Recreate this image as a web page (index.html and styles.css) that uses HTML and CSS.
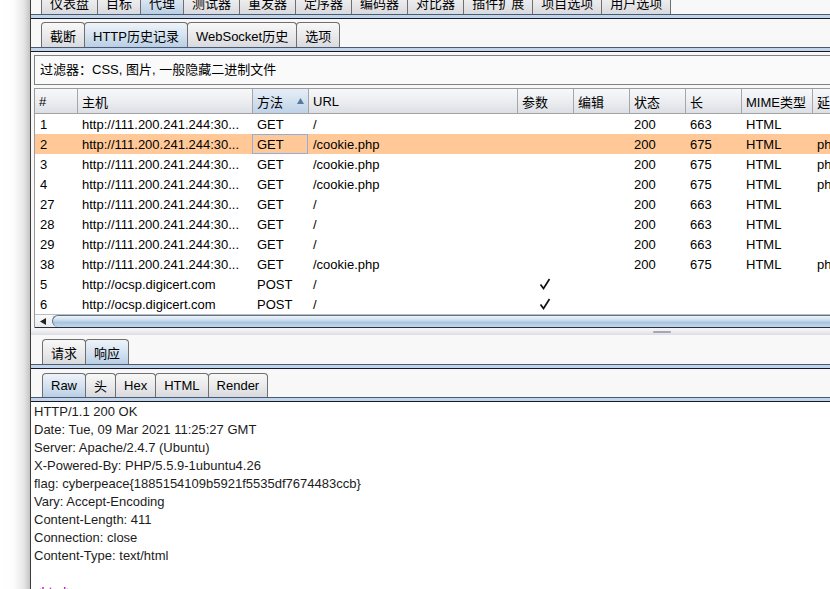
FILE: index.html
```html
<!DOCTYPE html>
<html lang="zh-CN">
<head>
<meta charset="utf-8">
<title>HTTP历史记录</title>
<link rel="stylesheet" href="styles.css">
</head>
<body>
<div class="gutter"></div>
<div class="app">
  <div class="tabs tabs-main">
    <div class="tab">仪表盘</div>
    <div class="tab">目标</div>
    <div class="tab sel">代理</div>
    <div class="tab">测试器</div>
    <div class="tab">重发器</div>
    <div class="tab">定序器</div>
    <div class="tab">编码器</div>
    <div class="tab">对比器</div>
    <div class="tab">插件扩展</div>
    <div class="tab">项目选项</div>
    <div class="tab">用户选项</div>
  </div>
  <div class="band"></div>
  <div class="tabs tabs-sub">
    <div class="tab">截断</div>
    <div class="tab sel">HTTP历史记录</div>
    <div class="tab">WebSocket历史</div>
    <div class="tab">选项</div>
  </div>
  <div class="band"></div>
  <div class="history">
    <div class="filter">过滤器：CSS, 图片, 一般隐藏二进制文件</div>
    <div class="table">
      <div class="row thead">
        <div class="th">#</div>
        <div class="th">主机</div>
        <div class="th sorted"><span>方法</span><svg class="sort" width="7" height="6" viewBox="0 0 7 6"><path d="M3.5 0 L7 6 L0 6 Z" fill="#5878a0"/></svg></div>
        <div class="th">URL</div>
        <div class="th">参数</div>
        <div class="th">编辑</div>
        <div class="th">状态</div>
        <div class="th">长</div>
        <div class="th">MIME类型</div>
        <div class="th">延</div>
      </div>
      <div class="tbody">
        <div class="row"><div class="td">1</div><div class="td">http://111.200.241.244:30...</div><div class="td">GET</div><div class="td">/</div><div class="td"></div><div class="td"></div><div class="td">200</div><div class="td">663</div><div class="td">HTML</div><div class="td"></div></div>
        <div class="row hl"><div class="td">2</div><div class="td">http://111.200.241.244:30...</div><div class="td focus">GET</div><div class="td">/cookie.php</div><div class="td"></div><div class="td"></div><div class="td">200</div><div class="td">675</div><div class="td">HTML</div><div class="td">php</div></div>
        <div class="row"><div class="td">3</div><div class="td">http://111.200.241.244:30...</div><div class="td">GET</div><div class="td">/cookie.php</div><div class="td"></div><div class="td"></div><div class="td">200</div><div class="td">675</div><div class="td">HTML</div><div class="td">php</div></div>
        <div class="row"><div class="td">4</div><div class="td">http://111.200.241.244:30...</div><div class="td">GET</div><div class="td">/cookie.php</div><div class="td"></div><div class="td"></div><div class="td">200</div><div class="td">675</div><div class="td">HTML</div><div class="td">php</div></div>
        <div class="row"><div class="td">27</div><div class="td">http://111.200.241.244:30...</div><div class="td">GET</div><div class="td">/</div><div class="td"></div><div class="td"></div><div class="td">200</div><div class="td">663</div><div class="td">HTML</div><div class="td"></div></div>
        <div class="row"><div class="td">28</div><div class="td">http://111.200.241.244:30...</div><div class="td">GET</div><div class="td">/</div><div class="td"></div><div class="td"></div><div class="td">200</div><div class="td">663</div><div class="td">HTML</div><div class="td"></div></div>
        <div class="row"><div class="td">29</div><div class="td">http://111.200.241.244:30...</div><div class="td">GET</div><div class="td">/</div><div class="td"></div><div class="td"></div><div class="td">200</div><div class="td">663</div><div class="td">HTML</div><div class="td"></div></div>
        <div class="row"><div class="td">38</div><div class="td">http://111.200.241.244:30...</div><div class="td">GET</div><div class="td">/cookie.php</div><div class="td"></div><div class="td"></div><div class="td">200</div><div class="td">675</div><div class="td">HTML</div><div class="td">php</div></div>
        <div class="row"><div class="td">5</div><div class="td">http://ocsp.digicert.com</div><div class="td">POST</div><div class="td">/</div><div class="td check"><svg width="12" height="12" viewBox="0 0 12 12"><path d="M1.5 6.5 L4.5 10.5 L10.5 1" fill="none" stroke="#111" stroke-width="1.7"/></svg></div><div class="td"></div><div class="td"></div><div class="td"></div><div class="td"></div><div class="td"></div></div>
        <div class="row"><div class="td">6</div><div class="td">http://ocsp.digicert.com</div><div class="td">POST</div><div class="td">/</div><div class="td check"><svg width="12" height="12" viewBox="0 0 12 12"><path d="M1.5 6.5 L4.5 10.5 L10.5 1" fill="none" stroke="#111" stroke-width="1.7"/></svg></div><div class="td"></div><div class="td"></div><div class="td"></div><div class="td"></div><div class="td"></div></div>
      </div>
      <div class="hscroll">
        <div class="arrow"><svg width="6" height="7" viewBox="0 0 6 7"><path d="M0 3.5 L6 0 L6 7 Z" fill="#222"/></svg></div>
        <div class="thumb"></div>
      </div>
    </div>
  </div>
  <div class="splitter"><div class="grip"></div></div>
  <div class="tabs tabs-bottom">
    <div class="tab">请求</div>
    <div class="tab sel">响应</div>
  </div>
  <div class="band"></div>
  <div class="tabs tabs-bottom tabs-view">
    <div class="tab sel">Raw</div>
    <div class="tab">头</div>
    <div class="tab">Hex</div>
    <div class="tab">HTML</div>
    <div class="tab">Render</div>
  </div>
  <div class="band"></div>
  <div class="response"><div>HTTP/1.1 200 OK</div><div>Date: Tue, 09 Mar 2021 11:25:27 GMT</div><div>Server: Apache/2.4.7 (Ubuntu)</div><div>X-Powered-By: PHP/5.5.9-1ubuntu4.26</div><div>flag: cyberpeace{1885154109b5921f5535df7674483ccb}</div><div>Vary: Accept-Encoding</div><div>Content-Length: 411</div><div>Connection: close</div><div>Content-Type: text/html</div><div>&nbsp;</div><div class="tag">&lt;html&gt;</div></div>
</div>
</body>
</html>
```

FILE: styles.css
```css
html, body {
  margin: 0;
  padding: 0;
}
body {
  width: 830px;
  height: 589px;
  overflow: hidden;
  display: flex;
  font-family: "Liberation Sans", "Noto Sans CJK SC", sans-serif;
  font-size: 13px;
  color: #000;
  background: #f8f8f8;
}
.gutter {
  width: 30px;
  flex: none;
  background: linear-gradient(to right, #ffffff 0%, #fdfdfd 45%, #e6e6e6 80%, #c4c4c4 100%);
  border-right: 1px solid #3a3a3a;
}
.app {
  flex: 1;
  min-width: 0;
  display: flex;
  flex-direction: column;
  background: #f8f8f8;
}
.tabs {
  display: flex;
  align-items: flex-end;
  flex: none;
}
.tab {
  box-sizing: border-box;
  height: 25px;
  padding: 0 8px;
  display: flex;
  align-items: center;
  border: 1px solid #6f6f6f;
  border-bottom: none;
  border-radius: 4px 4px 0 0;
  margin-right: -1px;
  background: linear-gradient(#f8f8f8, #e9e9eb 55%, #d9dade);
  white-space: nowrap;
}
.tab.sel {
  background: linear-gradient(#eef3f9, #d3e1ef 55%, #b9cfe6);
  position: relative;
  z-index: 1;
}
.tabs-main {
  height: 14px;
  overflow: hidden;
  padding-left: 10px;
}
.tabs-main .tab {
  padding-top: 1px;
}
.tabs-sub {
  height: 28px;
  padding-left: 10px;
}
.tabs-bottom {
  height: 29px;
  padding-left: 11px;
}
.tabs-view {
  height: 28px;
}
.tabs-view .tab {
  height: 24px;
}
.band {
  flex: none;
  height: 3px;
  border-top: 1px solid #4a5a70;
  border-bottom: 1px solid #151a26;
  background: #c2d5ea;
}
.history {
  flex: none;
  padding: 3px 0 0 3px;
}
.filter {
  box-sizing: border-box;
  width: 820px;
  height: 30px;
  border: 1px solid #828282;
  background: #fafafa;
  display: flex;
  align-items: center;
  padding: 0 0 3px 5px;
}
.table {
  margin-top: 3px;
  width: 820px;
  border-left: 1px solid #9a9a9a;
}
.row {
  display: grid;
  grid-template-columns: 42px 175px 56px 209px 56px 56px 56px 56px 71px 60px;
  height: 20px;
  align-items: stretch;
}
.thead {
  height: 24px;
  border-top: 1px solid #9c9c9c;
  border-bottom: 1px solid #a3a3a3;
  background: linear-gradient(#f7f8fa, #eceef1 50%, #dcdfe5);
}
.th {
  box-sizing: border-box;
  display: flex;
  align-items: center;
  padding-left: 4px;
  border-left: 1px solid #a6a6a8;
  white-space: nowrap;
  overflow: hidden;
}
.th:first-child {
  border-left: none;
}
.th.sorted {
  justify-content: space-between;
  padding-right: 4px;
  background: linear-gradient(#e6eef7, #d3e1ef 50%, #bed2e8);
}
.sort {
  flex: none;
}
.tbody {
  background: #ffffff;
}
.td {
  box-sizing: border-box;
  display: flex;
  align-items: center;
  padding-left: 5px;
  white-space: nowrap;
  overflow: hidden;
}
.row.hl {
  background: #ffc896;
}
.td.focus {
  box-shadow: inset 0 0 0 1px #8eb0d8;
}
.td.check {
  padding-left: 0;
  justify-content: center;
}
.hscroll {
  display: flex;
  height: 12px;
  border-top: 1px solid #bdbdbd;
  border-bottom: 1px solid #26303e;
  background: #eef0f3;
}
.arrow {
  width: 17px;
  flex: none;
  display: flex;
  align-items: center;
  padding-left: 5px;
  box-sizing: border-box;
  background: linear-gradient(#fbfbfb, #e8eaee);
}
.thumb {
  flex: 1;
  border: 1px solid #5d7088;
  border-right: none;
  border-bottom: none;
  border-radius: 7px 0 0 7px;
  background: linear-gradient(#eef4fa, #cfdfef 35%, #a9c4e0 60%, #c3d7ec);
}
.splitter {
  flex: none;
  height: 7px;
  background: linear-gradient(#f4f4f6, #f0f0f3 40%, #dcdce3);
  display: flex;
  align-items: center;
  padding-left: 622px;
}
.grip {
  width: 18px;
  height: 2px;
  background: #a4a8b4;
  border-radius: 1px;
}
.response {
  flex: 1;
  background: #ffffff;
  padding: 1px 0 0 3px;
  line-height: 18px;
  color: #1c1c1c;
  white-space: pre;
}
.tag {
  color: #990099;
}
```
